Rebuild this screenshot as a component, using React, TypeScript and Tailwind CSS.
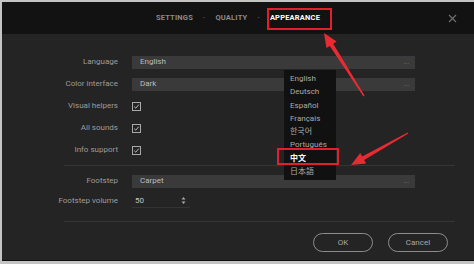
import React from "react"

const languages = ["English", "Deutsch", "Español", "Français", "한국어", "Português", "中文", "日本語"]

function Arrow({ x1, y1, x2, y2 }: { x1: number; y1: number; x2: number; y2: number }) {
  // tapered red arrow from tail (x1,y1) to tip (x2,y2)
  const dx = x2 - x1
  const dy = y2 - y1
  const len = Math.hypot(dx, dy)
  const ux = dx / len
  const uy = dy / len
  const nx = -uy
  const ny = ux
  const head = 14
  const bx = x2 - ux * head
  const by = y2 - uy * head
  const pts = [
    [x1 + nx * 0.7, y1 + ny * 0.7],
    [bx + nx * 2, by + ny * 2],
    [bx + nx * 6, by + ny * 6],
    [x2, y2],
    [bx - nx * 6, by - ny * 6],
    [bx - nx * 2, by - ny * 2],
    [x1 - nx * 0.7, y1 - ny * 0.7],
  ]
  return <polygon points={pts.map((p) => p.join(",")).join(" ")} fill="#ea2a33" />
}

function Field({ value }: { value: string }) {
  return (
    <div className="w-[283px] h-[13px] bg-[#3a3a3a] flex items-center justify-between pl-[8px] pr-[6px]">
      <span className="text-[8px] text-[#bcbcbc]">{value}</span>
      <span className="text-[7px] leading-none text-[#777]">...</span>
    </div>
  )
}

function Check() {
  return (
    <div className="w-[9px] h-[9px] border border-[#a8a8a8] flex items-center justify-center">
      <svg width="7" height="7" viewBox="0 0 7 7">
        <path d="M1.2 3.6 L2.8 5.2 L5.8 1.6" stroke="#bdbdbd" strokeWidth="1" fill="none" />
      </svg>
    </div>
  )
}

function Row({ label, children, h = "h-[22px]" }: { label: string; children: React.ReactNode; h?: string }) {
  return (
    <div className={`flex items-center ${h}`}>
      <div className="w-[116px] text-right text-[8px] text-[#9c9c9c]">{label}</div>
      <div className="ml-[14px]">{children}</div>
    </div>
  )
}

export default function App() {
  return (
    <div
      className="relative w-[474px] h-[264px] bg-[#c4c4c4] pl-[2px] pt-[2px] pb-[3px] overflow-hidden"
      style={{ fontFamily: "Roboto, 'Noto Sans CJK SC', sans-serif" }}
    >
      <div className="flex flex-col h-full bg-[#242424] border-b border-[#0e0e0e]">
        {/* header tabs */}
        <div className="relative h-[32px] bg-[#121212] flex items-center justify-center gap-[10px] text-[7.5px] font-bold tracking-[0.2px]">
          <span className="text-[#8a8a8a]">SETTINGS</span>
          <span className="text-[#5a5a5a]">·</span>
          <span className="text-[#8a8a8a]">QUALITY</span>
          <span className="text-[#5a5a5a]">·</span>
          <span className="text-white">APPEARANCE</span>
          <svg className="absolute left-[446px] top-[12px]" width="9" height="9" viewBox="0 0 9 9">
            <path d="M1 1 L8 8 M8 1 L1 8" stroke="#6e6e6e" strokeWidth="1.2" />
          </svg>
        </div>

        {/* settings */}
        <div className="pt-[17px] flex flex-col">
          <Row label="Language">
            <Field value="English" />
          </Row>
          <Row label="Color interface">
            <Field value="Dark" />
          </Row>
          <Row label="Visual helpers">
            <Check />
          </Row>
          <Row label="All sounds">
            <Check />
          </Row>
          <Row label="Info support">
            <Check />
          </Row>
          <div className="ml-[62px] mt-[4px] w-[391px] h-px bg-[#353535]" />
          <div className="mt-[5px]">
            <Row label="Footstep" h="h-[20px]">
              <Field value="Carpet" />
            </Row>
            <Row label="Footstep volume" h="h-[20px]">
              <div className="w-[58px] h-[13px] flex items-center justify-between pl-[3px] pr-[4px] border-b border-[#333]">
                <span className="text-[8px] text-[#c4c4c4]">50</span>
                <svg width="5" height="9" viewBox="0 0 5 9">
                  <path d="M0.5 3.5 L2.5 1 L4.5 3.5 Z M0.5 5.5 L2.5 8 L4.5 5.5 Z" fill="#a8a8a8" />
                </svg>
              </div>
            </Row>
          </div>
          <div className="ml-[62px] mt-[10px] w-[391px] h-px bg-[#353535]" />
          <div className="flex justify-end gap-[15px] pr-[26px] mt-[11px]">
            <button className="w-[60px] h-[19px] rounded-full border border-[#8c8c8c] text-[8px] text-[#a8a8a8]">OK</button>
            <button className="w-[60px] h-[19px] rounded-full border border-[#8c8c8c] text-[8px] text-[#a8a8a8]">Cancel</button>
          </div>
        </div>
      </div>

      {/* language dropdown */}
      <div className="absolute left-[284px] top-[70px] w-[52px] h-[110px] bg-[#111111] pt-[2px] flex flex-col">
        {languages.map((lang) => (
          <div
            key={lang}
            className={`h-[13.3px] leading-[13.3px] pl-[6px] text-[8px] ${
              lang === "中文" ? "font-bold text-white" : "text-[#a9a9a9]"
            }`}
          >
            {lang}
          </div>
        ))}
      </div>

      {/* highlight boxes */}
      <div className="absolute left-[267px] top-[8px] w-[65px] h-[22px] border-2 border-[#e2202b]" />
      <div className="absolute left-[277px] top-[148px] w-[62px] h-[17px] border-2 border-[#e2202b]" />

      <svg className="absolute left-0 top-0 pointer-events-none" width="474" height="264">
        <Arrow x1={364} y1={96} x2={324} y2={33} />
        <Arrow x1={408} y1={133} x2={351} y2={165} />
      </svg>
    </div>
  )
}
